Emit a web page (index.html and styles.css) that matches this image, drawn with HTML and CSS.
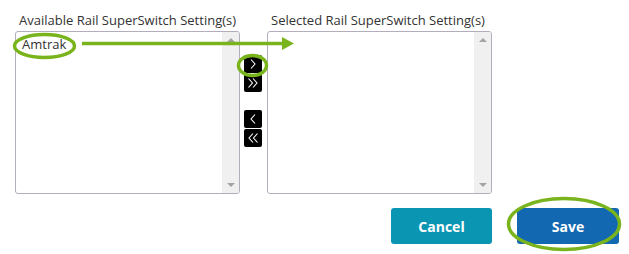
FILE: index.html
```html
<!DOCTYPE html>
<html>
<head>
<meta charset="utf-8">
<link rel="stylesheet" href="styles.css">
</head>
<body>
<div class="page">
  <div class="lists">
    <div class="col">
      <div class="label">Available Rail SuperSwitch Setting(s)</div>
      <div class="box">
        <div class="options"><div class="option">Amtrak</div></div>
        <div class="scrollbar"><span class="arrow up"></span><span class="arrow down"></span></div>
      </div>
    </div>
    <div class="movers">
      <div class="group">
        <button class="mv"><svg width="18" height="18" viewBox="0 0 18 18"><polyline points="7,4.5 11,9 7,13.5" /></svg></button>
        <button class="mv"><svg width="18" height="18" viewBox="0 0 18 18"><polyline points="4.5,4.5 8.5,9 4.5,13.5" /><polyline points="9,4.5 13,9 9,13.5" /></svg></button>
      </div>
      <div class="group">
        <button class="mv"><svg width="18" height="18" viewBox="0 0 18 18"><polyline points="11,4.5 7,9 11,13.5" /></svg></button>
        <button class="mv"><svg width="18" height="18" viewBox="0 0 18 18"><polyline points="9,4.5 5,9 9,13.5" /><polyline points="13.5,4.5 9.5,9 13.5,13.5" /></svg></button>
      </div>
    </div>
    <div class="col">
      <div class="label">Selected Rail SuperSwitch Setting(s)</div>
      <div class="box">
        <div class="options"></div>
        <div class="scrollbar"><span class="arrow up"></span><span class="arrow down"></span></div>
      </div>
    </div>
  </div>
  <div class="actions">
    <button class="btn cancel">Cancel</button>
    <button class="btn save">Save</button>
  </div>
</div>
<svg class="marks" width="629" height="254" viewBox="0 0 629 254">
  <ellipse cx="44.5" cy="46" rx="30" ry="11.5" />
  <line x1="82" y1="43.5" x2="285" y2="43.5" />
  <polygon class="head" points="282,37 294,43.5 282,50" />
  <ellipse cx="252.5" cy="65.5" rx="14" ry="10" />
  <ellipse cx="564" cy="224" rx="55.5" ry="25.5" />
</svg>
</body>
</html>
```

FILE: styles.css
```css
html, body {
  margin: 0;
  padding: 0;
  background: #ffffff;
}
body {
  font-family: "Open Sans", "Liberation Sans", sans-serif;
  color: #333333;
  position: relative;
  width: 629px;
  height: 254px;
  overflow: hidden;
}
.page {
  padding: 11px 0 0 15px;
  width: 604px;
}
.lists {
  display: flex;
}
.col {
  display: flex;
  flex-direction: column;
  width: 225px;
}
.label {
  font-size: 13px;
  line-height: 18px;
  padding-left: 4px;
  margin-bottom: 2px;
  white-space: nowrap;
}
.box {
  box-sizing: border-box;
  height: 163px;
  border: 1px solid #b4adbb;
  border-radius: 3px;
  display: flex;
  overflow: hidden;
}
.options {
  flex: 1;
  padding: 3px 6px;
}
.option {
  font-size: 13px;
  line-height: 18px;
}
.scrollbar {
  width: 17px;
  background: #f0f0f0;
  display: flex;
  flex-direction: column;
  justify-content: space-between;
  align-items: center;
  padding: 6px 0;
}
.arrow {
  width: 0;
  height: 0;
  border-left: 4px solid transparent;
  border-right: 4px solid transparent;
}
.arrow.up {
  border-bottom: 4px solid #a3a3a3;
}
.arrow.down {
  border-top: 4px solid #a3a3a3;
}
.movers {
  width: 27px;
  display: flex;
  flex-direction: column;
  gap: 18px;
  padding-top: 44px;
}
.group {
  display: flex;
  flex-direction: column;
  gap: 1px;
  padding-left: 4px;
}
.mv {
  width: 18px;
  height: 18px;
  padding: 0;
  border: none;
  border-radius: 2px;
  background: #000000;
  display: block;
}
.mv svg {
  display: block;
}
.mv polyline {
  fill: none;
  stroke: #ffffff;
  stroke-width: 1.1;
}
.actions {
  display: flex;
  justify-content: flex-end;
  gap: 25px;
  margin-top: 14px;
}
.btn {
  height: 36px;
  border: none;
  border-radius: 3px;
  color: #ffffff;
  font-family: "Open Sans", "Liberation Sans", sans-serif;
  font-weight: 700;
  font-size: 14px;
  padding: 0;
}
.cancel {
  width: 101px;
  background: #0a96b3;
}
.save {
  width: 102px;
  background: #1368b2;
}
.marks {
  position: absolute;
  left: 0;
  top: 0;
  pointer-events: none;
}
.marks ellipse, .marks line {
  fill: none;
  stroke: #7ab41c;
  stroke-width: 3.5;
}
.marks .head {
  fill: #7ab41c;
}
```
